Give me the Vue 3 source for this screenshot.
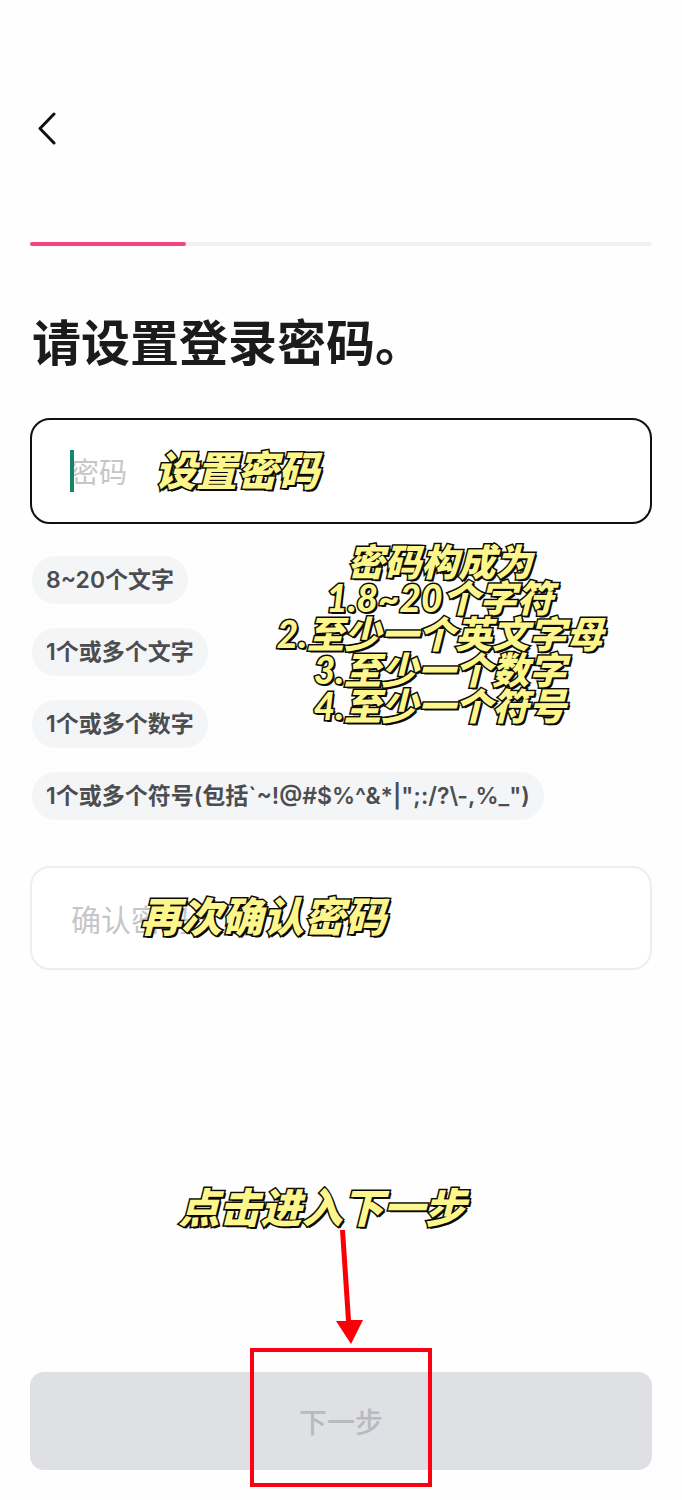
<script setup>
import { ref } from 'vue'

const password = ref('')
const confirmation = ref('')
const rules = [
  '8~20个文字',
  '1个或多个文字',
  '1个或多个数字',
  '1个或多个符号(包括`~!@#$%^&*|";:/?\\-,%_")',
]
const notes = ['密码构成为', '1.8~20个字符', '2.至少一个英文字母', '3.至少一个数字', '4.至少一个符号'].join('\n')
const progress = 25
</script>

<template>
  <main class="page">
    <header class="bar">
      <button class="back" type="button" aria-label="返回">
        <svg width="18" height="34" viewBox="0 0 18 34" fill="none" stroke="#111" stroke-width="3" stroke-linecap="round" stroke-linejoin="round">
          <path d="M16 2 2 16.500 16 31" />
        </svg>
      </button>
    </header>

    <div class="track" role="progressbar" aria-label="进度" :aria-valuenow="progress" aria-valuemin="0" aria-valuemax="100">
      <div class="fill" :style="{ width: progress + '%' }"></div>
    </div>

    <h1 class="title">请设置登录密码。</h1>

    <div class="field">
      <input v-model="password" class="input active" type="password" placeholder="密码" aria-label="密码" />
      <span class="caret"></span>
      <span class="note note-set">设置密码</span>
    </div>

    <section class="requirements">
      <ul class="chips">
        <li v-for="rule in rules" :key="rule" class="chip">{{ rule }}</li>
      </ul>
      <p class="note note-rules">{{ notes }}</p>
    </section>

    <div class="field">
      <input v-model="confirmation" class="input confirm" type="password" placeholder="确认密码" aria-label="确认密码" />
      <span class="note note-confirm">再次确认密码</span>
    </div>

    <footer class="footer">
      <button class="next" type="button" disabled>下一步</button>
      <div class="guide">
        <span class="note">点击进入下一步</span>
        <svg class="arrow" width="28" height="114" viewBox="0 0 28 114" fill="#f90009">
          <path d="M5 0h5l6 90h12L16 114 1 91h10Z" />
        </svg>
        <span class="frame"></span>
      </div>
    </footer>
  </main>
</template>

<style>
body {
  margin: 0;
  background: #fefefe;
}
</style>

<style scoped>
.page {
  box-sizing: border-box;
  display: flex;
  flex-direction: column;
  min-height: 100vh;
  padding: 104px 30px 30px;
  font-family: Inter, "Noto Sans CJK SC", sans-serif;
  color: #1b1b1d;
}
.bar {
  display: flex;
  height: 138px;
  align-items: flex-start;
}
.back {
  display: flex;
  padding: 8px;
  border: 0;
  background: none;
}
.track {
  height: 4px;
  border-radius: 2px;
  background: #f1f1f2;
}
.fill {
  height: 100%;
  border-radius: 2px;
  background: #f5457b;
}
.title {
  margin: 58px 2px 42px;
  font-family: "Noto Sans CJK SC", sans-serif;
  font-size: 49px;
  line-height: 72px;
  font-weight: 700;
}
.field {
  position: relative;
}
.input {
  box-sizing: border-box;
  display: block;
  width: 100%;
  height: 104px;
  padding: 0 39px;
  border: 2px solid #eeeeef;
  border-radius: 20px;
  outline: 0;
  background: #fff;
  font-family: "Noto Sans CJK SC", sans-serif;
  font-size: 30px;
}
.active {
  height: 106px;
  border-color: #111;
  font-size: 28px;
}
.input::placeholder {
  color: #c6c6c8;
  opacity: 1;
}
.caret {
  position: absolute;
  top: 32px;
  left: 40px;
  width: 4px;
  height: 42px;
  background: #168568;
}
.note {
  margin: 0;
  font-family: Lato, "Noto Sans CJK SC", sans-serif;
  font-size: 41px;
  line-height: 60px;
  font-weight: 900;
  font-style: italic;
  white-space: pre;
  color: #fcf68c;
  -webkit-text-stroke: 3px #0b0b05;
  paint-order: stroke fill;
  text-shadow: 1px 1px 0 #0b0b05, 2px 2px 0 #0b0b05;
  pointer-events: none;
}
.note-set {
  position: absolute;
  top: 23px;
  left: 125px;
}
.note-confirm {
  position: absolute;
  top: 21px;
  left: 110px;
}
.requirements {
  position: relative;
  margin: 32px 0 46px;
}
.chips {
  display: flex;
  flex-direction: column;
  align-items: flex-start;
  gap: 24px;
  margin: 0 2px;
  padding: 0;
  list-style: none;
}
.chip {
  padding: 0 14px;
  border-radius: 24px;
  background: #f4f5f7;
  font-size: 23px;
  line-height: 48px;
  font-weight: 600;
  color: #4b4d50;
}
.note-rules {
  position: absolute;
  top: -12px;
  right: 49px;
  font-size: 37px;
  line-height: 36px;
  text-align: center;
}
.footer {
  position: relative;
  margin-top: auto;
}
.next {
  display: block;
  width: 100%;
  height: 98px;
  border: 0;
  border-radius: 14px;
  background: #dfe0e4;
  font-family: "Noto Sans CJK SC", sans-serif;
  font-size: 28px;
  font-weight: 500;
  color: #b9babe;
}
.guide {
  position: absolute;
  bottom: -17px;
  left: 50%;
  display: flex;
  flex-direction: column;
  align-items: center;
  width: 320px;
  margin-left: -160px;
  pointer-events: none;
}
.guide .note {
  margin-right: 38px;
}
.arrow {
  margin: -8px 0 4px 16px;
}
.frame {
  box-sizing: border-box;
  width: 182px;
  height: 139px;
  border: 4px solid #fc0013;
}
</style>
